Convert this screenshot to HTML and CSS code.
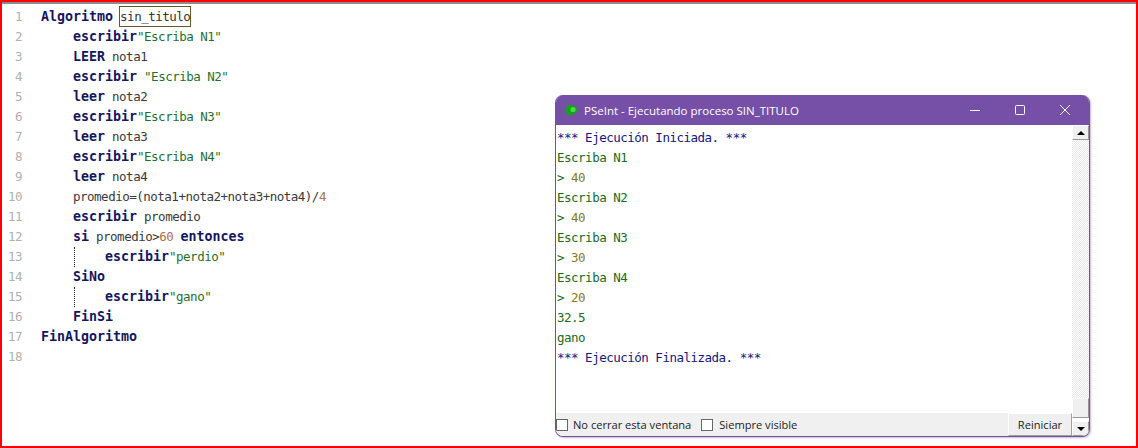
FILE: index.html
```html
<!DOCTYPE html>
<html lang="es">
<head>
<meta charset="utf-8">
<title>PSeInt</title>
<link rel="stylesheet" href="styles.css">
</head>
<body>
<div class="frame">
  <div class="topline"></div>
  <div class="editor">
    <div class="gutter">
      <span>1</span><span>2</span><span>3</span><span>4</span><span>5</span><span>6</span><span>7</span><span>8</span><span>9</span><span>10</span><span>11</span><span>12</span><span>13</span><span>14</span><span>15</span><span>16</span><span>17</span><span>18</span>
    </div>
    <div class="code">
      <div class="ln"><b>Algoritmo</b> <span class="sel">sin_titulo</span></div>
      <div class="ln i1"><b>escribir</b><span class="s">"Escriba N1"</span></div>
      <div class="ln i1"><b>LEER</b> nota1</div>
      <div class="ln i1"><b>escribir</b> <span class="s">"Escriba N2"</span></div>
      <div class="ln i1"><b>leer</b> nota2</div>
      <div class="ln i1"><b>escribir</b><span class="s">"Escriba N3"</span></div>
      <div class="ln i1"><b>leer</b> nota3</div>
      <div class="ln i1"><b>escribir</b><span class="s">"Escriba N4"</span></div>
      <div class="ln i1"><b>leer</b> nota4</div>
      <div class="ln i1">promedio=(nota1+nota2+nota3+nota4)/<span class="n">4</span></div>
      <div class="ln i1"><b>escribir</b> promedio</div>
      <div class="ln i1"><b>si</b> promedio&gt;<span class="n">60</span> <b>entonces</b></div>
      <div class="ln i1"><span class="guide"><b>escribir</b><span class="s">"perdio"</span></span></div>
      <div class="ln i1"><b>SiNo</b></div>
      <div class="ln i1"><span class="guide"><b>escribir</b><span class="s">"gano"</span></span></div>
      <div class="ln i1"><b>FinSi</b></div>
      <div class="ln"><b>FinAlgoritmo</b></div>
      <div class="ln"></div>
    </div>
  </div>
  <div class="window">
    <div class="titlebar">
      <svg class="logo" width="16" height="16" viewBox="0 0 16 16"><path d="M4.5 2.5 C7 2 12 5 13.5 7 Q14.5 8 13.5 9.2 C12 11 7 14 4.5 13.5 C2.5 13 2 10 2 8 C2 6 2.5 3 4.5 2.5Z" fill="#18a018"/><circle cx="9" cy="7.5" r="2.6" fill="#3fe03f"/></svg>
      <span class="wtitle">PSeInt - Ejecutando proceso SIN_TITULO</span>
      <div class="controls">
        <svg width="12" height="12" viewBox="0 0 12 12"><path d="M1 6.5H11" stroke="#fff" fill="none"/></svg>
        <svg width="12" height="12" viewBox="0 0 12 12"><rect x="1.5" y="1.5" width="9" height="9" rx="1" stroke="#fff" fill="none"/></svg>
        <svg width="12" height="12" viewBox="0 0 12 12"><path d="M1 1L11 11M11 1L1 11" stroke="#fff" fill="none"/></svg>
      </div>
    </div>
    <div class="wbody">
      <div class="wmain">
        <div class="term">
          <div class="t-info">*** Ejecución Iniciada. ***</div>
          <div class="t-out">Escriba N1</div>
          <div><span class="t-out">&gt;</span> <span class="t-in">40</span></div>
          <div class="t-out">Escriba N2</div>
          <div><span class="t-out">&gt;</span> <span class="t-in">40</span></div>
          <div class="t-out">Escriba N3</div>
          <div><span class="t-out">&gt;</span> <span class="t-in">30</span></div>
          <div class="t-out">Escriba N4</div>
          <div><span class="t-out">&gt;</span> <span class="t-in">20</span></div>
          <div class="t-out">32.5</div>
          <div class="t-out">gano</div>
          <div class="t-info">*** Ejecución Finalizada. ***</div>
        </div>
        <div class="statusbar">
          <span class="check"></span><span class="chk-label first">No cerrar esta ventana</span>
          <span class="check"></span><span class="chk-label">Siempre visible</span>
          <span class="restart">Reiniciar</span>
        </div>
      </div>
      <div class="scroll">
        <div class="sbtn"><span class="up"></span></div>
        <div class="strack"></div>
        <div class="thumb"></div>
        <div class="sgap"></div>
        <div class="sbtn"><span class="down"></span></div>
      </div>
    </div>
  </div>
</div>
</body>
</html>
```

FILE: styles.css
```css
* { box-sizing: border-box; }
html, body { margin: 0; padding: 0; }
body { width: 1138px; height: 448px; background: #fff; overflow: hidden; }
.frame {
  position: relative;
  width: 1138px;
  height: 448px;
  border: 2px solid #f00;
  background: #fff;
  overflow: hidden;
}
.topline { height: 2px; background: #8c8c8c; }
.editor {
  display: flex;
  padding-top: 3px;
  font-family: "DejaVu Sans Mono", monospace;
  font-size: 12.5px;
  letter-spacing: -0.5px;
  line-height: 20px;
  color: #3a3a3a;
}
.gutter {
  width: 39px;
  display: flex;
  flex-direction: column;
  align-items: flex-end;
  padding-right: 19px;
  color: #b0b0b0;
  flex: none;
}
.gutter span { display: block; height: 20px; }
.code { flex: 1; }
.ln { height: 20px; white-space: pre; }
.ln b { color: #15155f; font-weight: 700; font-size: 13.3px; letter-spacing: 0; }
.i1 { padding-left: 32px; }
.s { color: #1f6f30; }
.n { color: #b0704a; }
.sel { outline: 1px solid #6b5a1e; padding: 2px 0; color: #333; }
.guide {
  display: inline-block;
  height: 20px;
  padding-left: 30px;
  border-left: 1px dotted #222;
  margin-left: 1px;
}
.window {
  position: absolute;
  left: 553px;
  top: 93px;
  width: 535px;
  height: 342px;
  display: flex;
  flex-direction: column;
  border-radius: 8px;
  overflow: hidden;
  background: #fff;
  border: 1px solid #7450a5;
  border-top: 0;
  box-shadow: 1px 1px 2px rgba(80,60,120,.35);
  font-family: "Open Sans", "Noto Sans", sans-serif;
}
.titlebar {
  height: 30px;
  flex: none;
  display: flex;
  align-items: center;
  background: #7550a6;
  color: #fff;
  padding-left: 8px;
  font-size: 11.5px;
}
.logo { flex: none; }
.wtitle { margin-left: 4px; white-space: nowrap; }
.controls { margin-left: auto; display: flex; align-items: center; gap: 33px; padding-right: 18px; }
.controls svg { display: block; }
.wbody { flex: 1; display: flex; min-height: 0; }
.wmain { flex: 1; display: flex; flex-direction: column; min-width: 0; }
.term {
  flex: 1;
  padding: 3px 0 0 1px;
  font-family: "DejaVu Sans Mono", monospace;
  font-size: 12.5px;
  letter-spacing: -0.5px;
  line-height: 20px;
}
.term div { white-space: pre; height: 20px; }
.t-info { color: #15157f; }
.t-out { color: #1a6b1a; }
.t-in { color: #8a7a20; }
.statusbar {
  height: 23px;
  flex: none;
  display: flex;
  align-items: center;
  background: #f0f0f0;
  font-size: 11.1px;
  color: #222;
}
.check {
  width: 12px;
  height: 12px;
  flex: none;
  background: #fff;
  border: 1px solid #666;
}
.chk-label { margin-left: 6px; margin-right: 10px; white-space: nowrap; }
.chk-label.first { margin-left: 5px; }
.restart {
  margin-left: auto;
  width: 64px;
  height: 23px;
  line-height: 21px;
  text-align: center;
  background: #efefef;
  border: 1px solid #fff;
  border-right-color: #a0a0a0;
  border-bottom-color: #a0a0a0;
}
.scroll { width: 17px; flex: none; display: flex; flex-direction: column; background: #fff; }
.sbtn {
  height: 15px;
  flex: none;
  display: flex;
  align-items: center;
  justify-content: center;
  background: #f0f0f0;
  border: 1px solid #fff;
  border-right-color: #999;
  border-bottom-color: #999;
}
.strack {
  flex: 1;
  background-color: #fff;
  background-image: repeating-conic-gradient(#e8e8e8 0 25%, #fff 0 50%);
  background-size: 2px 2px;
}
.thumb {
  height: 20px;
  flex: none;
  background: #f0f0f0;
  border: 1px solid #fff;
  border-right-color: #999;
  border-bottom-color: #999;
}
.sgap { height: 3px; flex: none; background: #fff; }
.up { width: 0; height: 0; border: 4px solid transparent; border-top: 0; border-bottom: 4px solid #000; }
.down { width: 0; height: 0; border: 4px solid transparent; border-bottom: 0; border-top: 4px solid #000; }
```
